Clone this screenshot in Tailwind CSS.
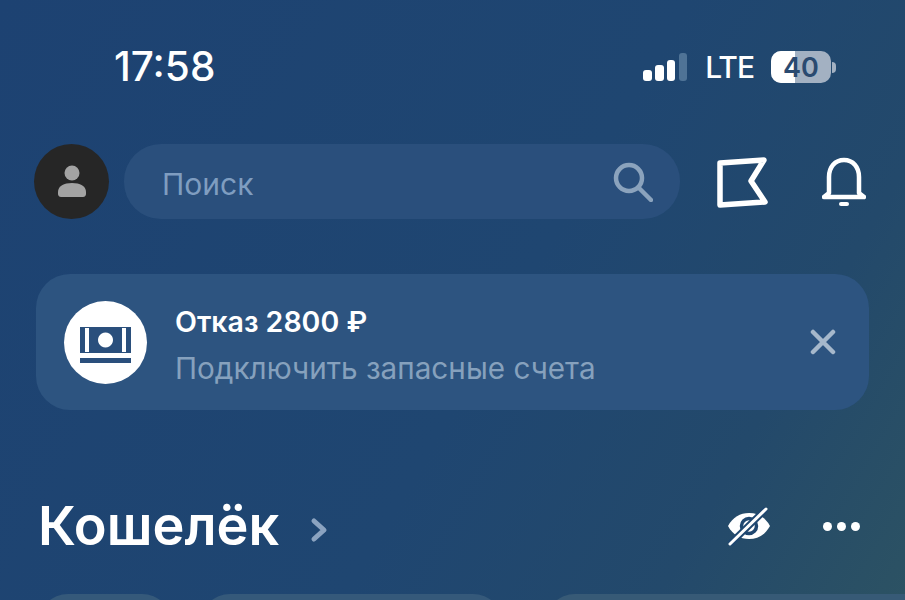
<!DOCTYPE html>
<html lang="ru">
  <head>
    <meta charset="UTF-8" />
    <meta name="viewport" content="width=device-width, initial-scale=1.0" />
    <title>Кошелёк</title>
    <script src="https://cdn.jsdelivr.net/npm/@tailwindcss/browser@4"></script>
  </head>
  <body class="h-[600px] w-[905px] overflow-hidden bg-[linear-gradient(120deg,#1d4272_0%,#1f4671_55%,#23496b_80%,#2c5263_100%)] font-['Inter','Noto_Sans',sans-serif] text-white">
    <!-- Status bar -->
    <div class="flex h-[144px] items-start justify-between pl-[114px] pr-[69px] pt-[44px]">
      <span class="text-[40.500px] leading-[46px] font-medium">17:58</span>
      <div class="mt-[6px] flex items-center">
        <svg width="46" height="30" viewBox="0 0 46 30" class="mr-[17px]">
          <rect x="1" y="18" width="9" height="11" rx="3" fill="#fff" />
          <rect x="13" y="13" width="9" height="16" rx="3" fill="#fff" />
          <rect x="25" y="8" width="8" height="21" rx="3" fill="#fff" />
          <rect x="37" y="1" width="8" height="28" rx="3" fill="#4f7396" />
        </svg>
        <span class="mr-[17px] text-[30px] leading-[34px] font-medium tracking-[-1px]">LTE</span>
        <div class="relative flex h-[32px] w-[60px] items-center justify-center overflow-hidden rounded-[10px] bg-[#a3b1c2]">
          <div class="absolute inset-y-0 left-0 w-[24px] bg-white"></div>
          <span class="relative text-[27px] leading-none font-semibold text-[#2a4a70]">40</span>
        </div>
        <div class="ml-[1px] h-[11px] w-[4px] rounded-r-full bg-[#a3b1c2]"></div>
      </div>
    </div>

    <!-- Search row -->
    <div class="flex h-[75px] items-center pl-[34px]">
      <div class="flex h-[75px] w-[75px] items-center justify-center rounded-full bg-[#262626]">
        <svg width="30" height="33" viewBox="0 0 30 33" fill="#a3a3a3">
          <circle cx="15" cy="8" r="7.5" />
          <path d="M1 27c0-6 6-9 14-9s14 3 14 9v2c0 1.500-1 3-3 3H4c-2 0-3-1.500-3-3z" />
        </svg>
      </div>
      <div class="ml-[15px] flex h-[75px] w-[556px] items-center justify-between rounded-[37px] bg-[#2a4f7c] pl-[38px] pr-[27px]">
        <span class="mt-[5px] text-[30px] text-[#7f9dc0]">Поиск</span>
        <svg width="40" height="40" viewBox="0 0 40 40" fill="none" stroke="#8ba3bd" stroke-width="4.500" stroke-linecap="round">
          <circle cx="16" cy="16" r="13" />
          <path d="M26 26l12 12" />
        </svg>
      </div>
      <svg width="54" height="52" viewBox="0 0 54 52" fill="none" stroke="#fff" stroke-width="5.500" stroke-linejoin="round" class="ml-[36px]">
        <path d="M4 7L48 4L35 25L49 46L4 49Z" />
      </svg>
      <svg width="44" height="50" viewBox="0 0 44 50" fill="none" class="ml-[52px]">
        <path d="M7 36V20C7 10 13 3 22 3s15 7 15 17v16l5 4H2z" stroke="#fff" stroke-width="4.500" stroke-linejoin="round" />
        <rect x="17" y="45" width="10" height="4" rx="2" fill="#fff" />
      </svg>
    </div>

    <!-- Refusal card -->
    <div class="mx-[36px] mt-[55px] flex h-[136px] w-[833px] items-center rounded-[34px] bg-[#2d5480] pl-[28px] pr-[33px]">
      <div class="flex h-[83px] w-[83px] items-center justify-center rounded-full bg-white">
        <svg width="52" height="36" viewBox="0 0 52 36" class="mt-[5px]">
          <path fill-rule="evenodd" fill="#2a4f7c" d="M0 0h51v26H0zM5 1v24h4V1zM42 1v24h4V1zM25.500 5.500a7.500 7.500 0 1 0 .01 0z" />
          <rect x="0" y="31" width="51" height="5" fill="#2a4f7c" />
        </svg>
      </div>
      <div class="ml-[28px] mt-[5px] flex-1">
        <div class="text-[28.500px] leading-[34px] font-semibold">Отказ 2800 ₽</div>
        <div class="mt-[12px] text-[29.700px] leading-[34px] text-[#86a1bd]">Подключить запасные счета</div>
      </div>
      <svg width="26" height="26" viewBox="0 0 26 26" stroke="#a6b8cb" stroke-width="4.500" stroke-linecap="round">
        <path d="M3 3l20 20M23 3L3 23" />
      </svg>
    </div>

    <!-- Wallet header -->
    <div class="mt-[84px] flex h-[64px] items-center pl-[38px] pr-[45px]">
      <span class="text-[54px] leading-[64px] font-semibold">Кошелёк</span>
      <svg width="18" height="26" viewBox="0 0 18 26" fill="none" stroke="#8ba3c0" stroke-width="5" stroke-linecap="round" stroke-linejoin="round" class="ml-[31px] mt-[8px]">
        <path d="M4 4l10 9-10 9" />
      </svg>
      <svg width="44" height="40" viewBox="0 0 44 40" class="ml-auto">
        <path fill="#fff" d="M1 20C6 11 13 7 22 7s16 4 21 13c-5 9-12 13-21 13S6 29 1 20z" />
        <circle cx="22" cy="20" r="7.500" fill="none" stroke="#1f4770" stroke-width="3.500" />
        <path d="M3 38L39 3" stroke="#1f4770" stroke-width="7" />
        <path d="M3 38L39 3" stroke="#fff" stroke-width="3" stroke-linecap="round" />
      </svg>
      <div class="ml-[52px] flex gap-[5px]">
        <div class="h-[9px] w-[9px] rounded-full bg-white"></div>
        <div class="h-[9px] w-[9px] rounded-full bg-white"></div>
        <div class="h-[9px] w-[9px] rounded-full bg-white"></div>
      </div>
    </div>

    <!-- Cards peeking from below -->
    <div class="mt-[36px] flex h-[6px] overflow-hidden pl-[38px]">
      <div class="h-[60px] w-[134px] shrink-0 rounded-[30px] bg-[#35597a]"></div>
      <div class="ml-[28px] h-[60px] w-[303px] shrink-0 rounded-[30px] bg-[#35597a]"></div>
      <div class="ml-[42px] h-[60px] w-[400px] shrink-0 rounded-[30px] bg-[#375a76]"></div>
    </div>
  </body>
</html>
